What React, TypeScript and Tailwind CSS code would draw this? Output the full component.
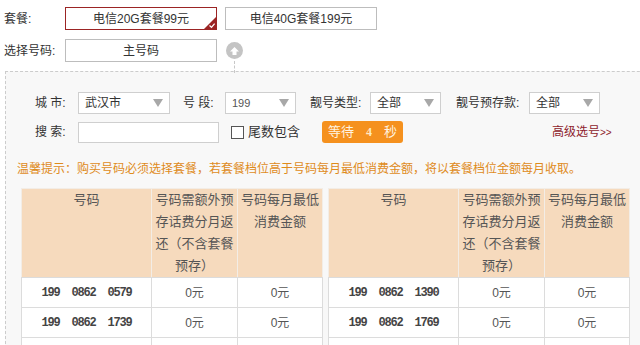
const FONT = "font-['Liberation_Sans','Noto_Sans_CJK_SC',sans-serif]";

const leftRows = [
  { num: "199  0862  0579" },
  { num: "199  0862  1739" },
  { num: "199  0862  2058" },
];
const rightRows = [
  { num: "199  0862  1390" },
  { num: "199  0862  1769" },
  { num: "199  0862  2171" },
];

function Select({ value, width, small }: { value: string; width: string; small?: boolean }) {
  return (
    <div
      className={`${width} h-[22px] bg-white border border-[#cfcfcf] flex items-center justify-between pl-[6px] pr-[6px]`}
    >
      <span className={small ? "text-[11px] text-[#555]" : "text-[12px] text-[#333]"}>{value}</span>
      <svg width="10" height="8" viewBox="0 0 10 8">
        <path d="M0 0 L10 0 L5 8 Z" fill="#a8a8a8" />
      </svg>
    </div>
  );
}

function NumberTable({ rows }: { rows: { num: string }[] }) {
  return (
    <table className="w-[301px] border-collapse table-fixed">
      <colgroup>
        <col className="w-[130px]" />
        <col className="w-[86px]" />
        <col className="w-[85px]" />
      </colgroup>
      <thead>
        <tr className="bg-[#f6dabd] text-[#555] text-[13px] leading-[22px]">
          <th className="font-normal align-top border border-[#f3ede6] border-b-[#dcdcdc] h-[88px]">号码</th>
          <th className="font-normal align-top border border-[#f3ede6] border-b-[#dcdcdc] px-[2px]">
            号码需额外预存话费分月返还（不含套餐预存）
          </th>
          <th className="font-normal align-top border border-[#f3ede6] border-b-[#dcdcdc] px-[2px]">
            号码每月最低消费金额
          </th>
        </tr>
      </thead>
      <tbody>
        {rows.map((r) => (
          <tr key={r.num} className="bg-white h-[30px]">
            <td className="border border-[#dcdcdc] text-center">
              <span className="font-['Liberation_Mono',monospace] font-bold text-[12px] tracking-[-1.2px] text-[#444] whitespace-pre">
                {r.num}
              </span>
            </td>
            <td className="border border-[#dcdcdc] text-center text-[12px] text-[#555]">0元</td>
            <td className="border border-[#dcdcdc] text-center text-[12px] text-[#555]">0元</td>
          </tr>
        ))}
      </tbody>
    </table>
  );
}

export default function App() {
  return (
    <div className={`w-[640px] h-[345px] overflow-hidden bg-white text-[12px] text-[#333] ${FONT}`}>
      <div className="pt-[7px] pl-[4px]">
        <div className="flex items-center h-[23px]">
          <span className="w-[61px] text-[12px] text-[#333]">套餐:</span>
          <div className="relative w-[152px] h-[23px] border border-[#9b2424] bg-white flex items-center justify-center text-[12px] text-[#333]">
            电信20G套餐99元
            <svg className="absolute right-0 bottom-0" width="12" height="12" viewBox="0 0 12 12">
              <path d="M12 0 L12 12 L0 12 Z" fill="#9b2424" />
              <path d="M5.5 8.5 L7.5 10.3 L10.6 6.6" stroke="#fff" strokeWidth="1.2" fill="none" />
            </svg>
          </div>
          <div className="ml-[8px] w-[152px] h-[23px] border border-[#bdbdbd] bg-white flex items-center justify-center text-[12px] text-[#333]">
            电信40G套餐199元
          </div>
        </div>
        <div className="flex items-center h-[23px] mt-[9px]">
          <span className="w-[61px] text-[12px] text-[#333]">选择号码:</span>
          <div className="w-[152px] h-[23px] border border-[#bdbdbd] bg-white flex items-center justify-center text-[12px] text-[#333]">
            主号码
          </div>
          <div className="relative ml-[9px] w-[17px] h-[17px] rounded-full bg-[#c4c4c4] flex items-center justify-center">
            <svg width="9" height="8" viewBox="0 0 9 8">
              <path d="M4.5 0 L9 4.5 L6.5 4.5 L6.5 8 L2.5 8 L2.5 4.5 L0 4.5 Z" fill="#fff" />
            </svg>
            <div className="absolute top-[19px] left-[8px] h-[12px] border-l border-dashed border-[#c8c8c8]" />
          </div>
        </div>
      </div>

      <div className="mt-[9px] ml-[5px] w-[700px] border border-dashed border-[#cccccc] bg-[#f8f8f8] pt-[20px] pl-[15px] pb-[10px]">
        <div className="pl-[14px]">
          <div className="flex items-center h-[22px] text-[12px] text-[#333]">
            <span className="w-[43px]">城 市:</span>
            <Select value="武汉市" width="w-[92px]" />
            <span className="ml-[13px] w-[42px]">号 段:</span>
            <Select value="199" width="w-[71px]" small />
            <span className="ml-[14px] w-[60px]">靓号类型:</span>
            <Select value="全部" width="w-[71px]" />
            <span className="ml-[15px] w-[73px]">靓号预存款:</span>
            <Select value="全部" width="w-[71px]" />
          </div>
          <div className="flex items-center h-[22px] mt-[7px] text-[12px] text-[#333]">
            <span className="w-[43px]">搜 索:</span>
            <div className="w-[141px] h-[21px] bg-white border border-[#cfcfcf]" />
            <div className="ml-[12px] w-[13px] h-[13px] border border-[#555] bg-white" />
            <span className="ml-[4px] text-[13px]">尾数包含</span>
            <div className="ml-[22px] w-[81px] h-[22px] rounded-[3px] bg-[#f5911e] flex items-center justify-center text-[13px] text-[#fff3e0]">
              <span>等待</span>
              <span className="ml-[12px] font-bold text-[12px] font-['Liberation_Serif',serif] text-[#ffe9c2]">4</span>
              <span className="ml-[12px]">秒</span>
            </div>
            <span className="ml-[149px] text-[12px] text-[#8e1c2c]">
              高级选号<span className="text-[10px]">&gt;&gt;</span>
            </span>
          </div>
        </div>
        <div className="mt-[19px] -ml-[4px] text-[12px] text-[#df8b1c] leading-[14px]">
          温馨提示：购买号码必须选择套餐，若套餐档位高于号码每月最低消费金额，将以套餐档位金额每月收取。
        </div>
        <div className="mt-[12px] flex gap-[5px] items-start">
          <NumberTable rows={leftRows} />
          <NumberTable rows={rightRows} />
        </div>
      </div>
    </div>
  );
}
